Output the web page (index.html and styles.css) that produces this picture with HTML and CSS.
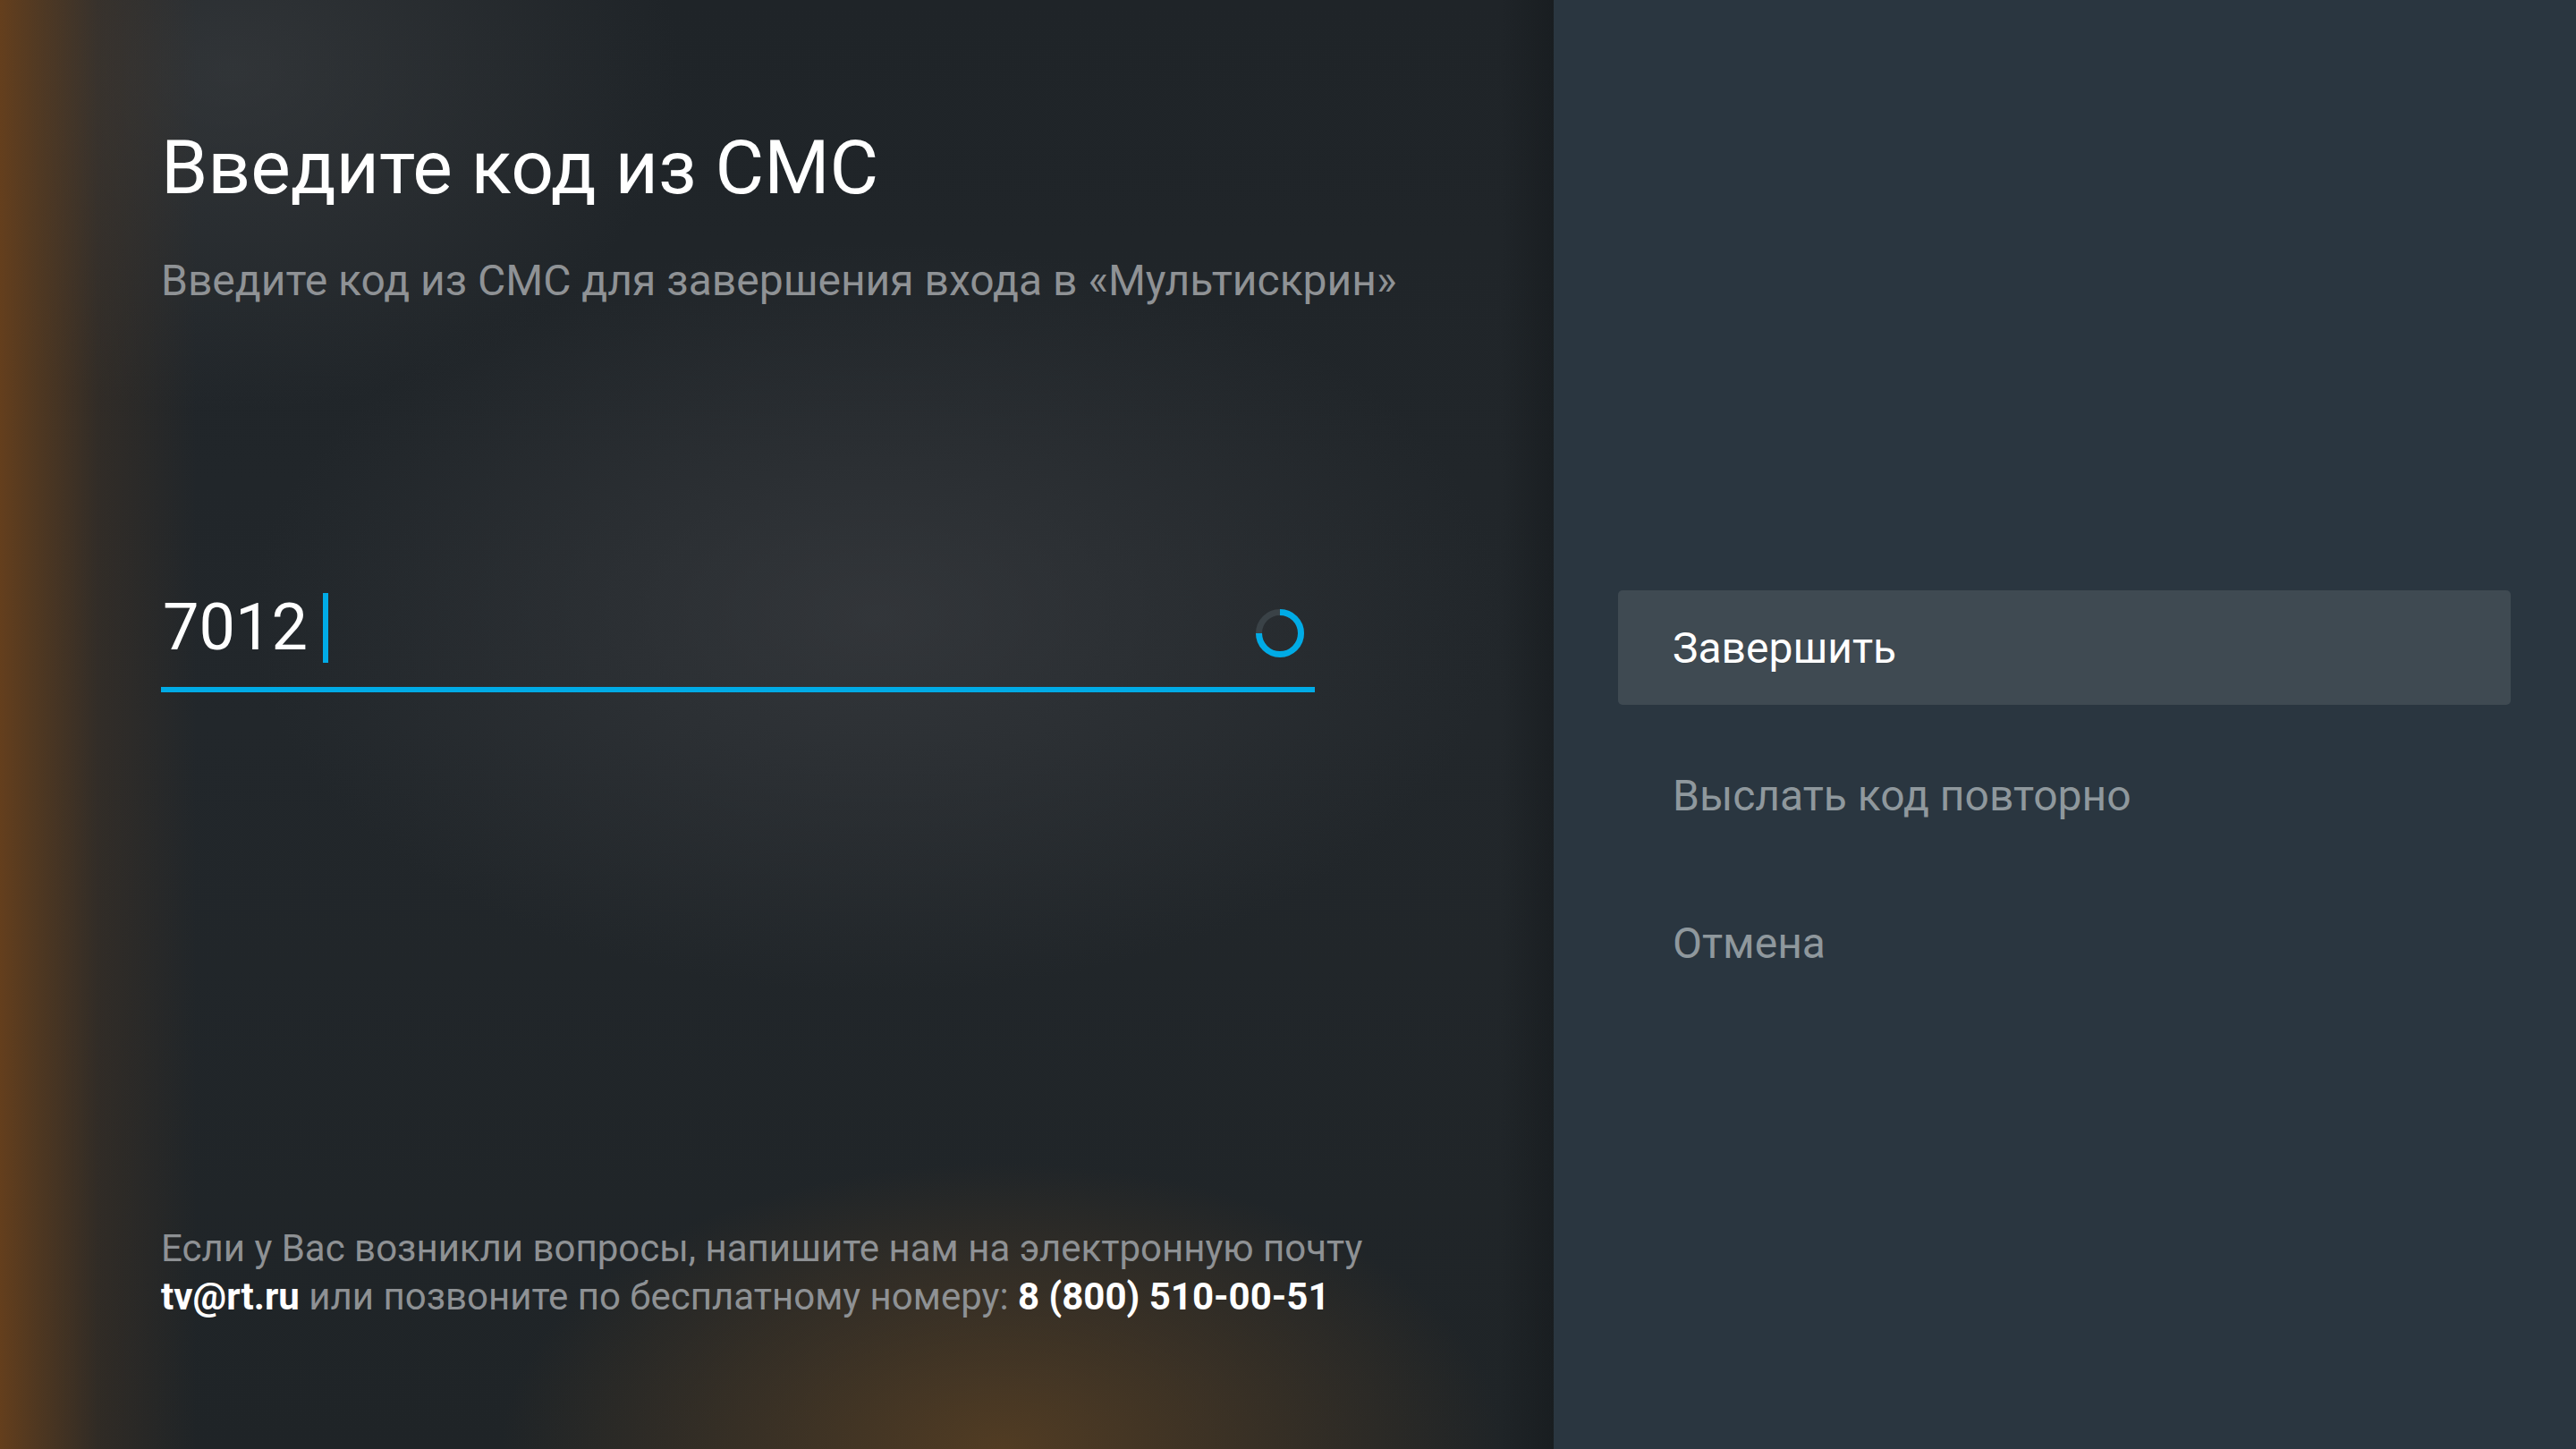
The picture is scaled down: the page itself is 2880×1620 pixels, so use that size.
FILE: index.html
```html
<!DOCTYPE html>
<html lang="ru">
<head>
<meta charset="utf-8">
<title>Введите код из СМС</title>
<link rel="stylesheet" href="styles.css">
</head>
<body>
<div class="screen">
  <section class="main">
    <h1 class="title">Введите код из СМС</h1>
    <p class="subtitle">Введите код из СМС для завершения входа в «Мультискрин»</p>
    <div class="field">
      <span class="code">7012</span>
      <span class="cursor"></span>
      <svg class="spinner" viewBox="0 0 54 54" width="54" height="54">
        <circle cx="27" cy="27" r="23.5" fill="none" stroke="#3a4247" stroke-width="7"/>
        <path d="M27 3.5 A23.5 23.5 0 1 1 3.5 27" fill="none" stroke="#00abe6" stroke-width="7"/>
      </svg>
    </div>
    <p class="help">Если у Вас возникли вопросы, напишите нам на электронную почту<br><b>tv@rt.ru</b> или позвоните по бесплатному номеру: <b>8 (800) 510-00-51</b></p>
  </section>
  <aside class="actions">
    <div class="action active">Завершить</div>
    <div class="action">Выслать код повторно</div>
    <div class="action">Отмена</div>
  </aside>
</div>
</body>
</html>
```

FILE: styles.css
```css
html, body {
  margin: 0;
  padding: 0;
}
body {
  width: 2880px;
  height: 1620px;
  overflow: hidden;
  font-family: Roboto, "Noto Sans", "Liberation Sans", sans-serif;
  background: #1e2327;
}
.screen {
  display: flex;
  width: 2880px;
  height: 1620px;
}
.main {
  position: relative;
  width: 1737px;
  flex: none;
  box-sizing: border-box;
  padding: 146px 0 143px 180px;
  display: flex;
  flex-direction: column;
  background:
    linear-gradient(to left, rgba(20,24,27,0.55) 0, rgba(20,24,27,0) 60px),
    linear-gradient(to right, rgba(104,64,28,0.95) 0, rgba(96,62,30,0.75) 40px, rgba(80,56,34,0.35) 110px, rgba(60,48,36,0) 220px),
    radial-gradient(ellipse 560px 320px at 1120px 1620px, rgba(94,66,34,0.8), rgba(94,66,34,0) 100%),
    radial-gradient(ellipse 700px 420px at 980px 690px, rgba(64,66,70,0.55), rgba(64,66,70,0) 100%),
    radial-gradient(ellipse 500px 380px at 260px 80px, rgba(70,72,74,0.45), rgba(70,72,74,0) 100%),
    linear-gradient(180deg, #1f2428 0%, #22272b 50%, #1f2427 100%);
}
.title {
  margin: 0;
  font-size: 84px;
  line-height: 84px;
  font-weight: 400;
  color: #ffffff;
}
.subtitle {
  margin: 60px 0 0;
  font-size: 48px;
  line-height: 48px;
  color: #8f9295;
}
.field {
  margin-top: 325px;
  width: 1290px;
  display: flex;
  align-items: flex-start;
  padding-bottom: 27px;
  border-bottom: 6px solid #00abe6;
}
.code {
  font-size: 72px;
  line-height: 78px;
  color: #ffffff;
  margin-left: 2px;
}
.cursor {
  width: 6px;
  height: 78px;
  margin-left: 17px;
  background: #00abe6;
}
.spinner {
  margin-left: auto;
  margin-right: 12px;
  margin-top: 18px;
}
.help {
  margin: auto 0 0;
  font-size: 42px;
  line-height: 54px;
  color: #8e9194;
}
.help b {
  color: #ffffff;
  font-weight: 700;
}
.actions {
  flex: 1;
  background: #2a3640;
  box-sizing: border-box;
  padding: 660px 73px 0 72px;
  display: flex;
  flex-direction: column;
  gap: 37px;
}
.action {
  height: 128px;
  display: flex;
  align-items: center;
  padding-left: 61px;
  border-radius: 5px;
  font-size: 48px;
  color: #8f989d;
}
.action.active {
  background: #3f4a52;
  color: #ffffff;
}
```
